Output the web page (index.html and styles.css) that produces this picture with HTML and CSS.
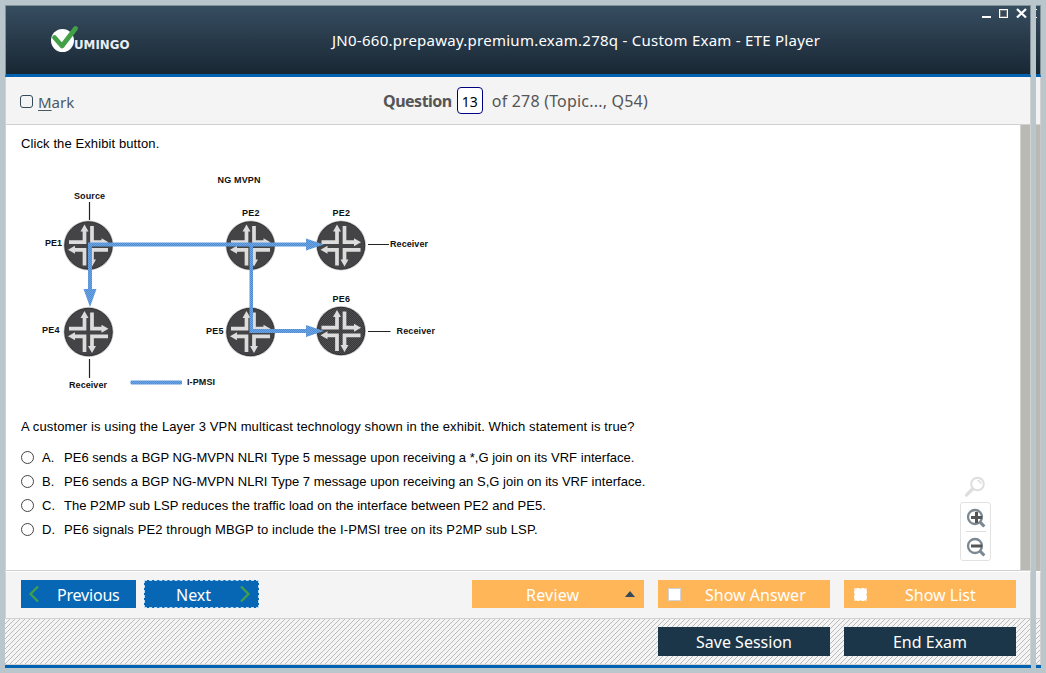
FILE: index.html
```html
<!DOCTYPE html>
<html lang="en">
<head>
<meta charset="utf-8">
<title>ETE Player</title>
<link rel="stylesheet" href="styles.css">
</head>
<body>
<div class="desktop">
  <main class="window">
    <header class="titlebar">
      <svg class="logo" width="84" height="32" viewBox="0 0 84 32">
        <circle cx="13.500" cy="17.500" r="11.500" fill="#fff"/>
        <path d="M5.500 14.500 L13 23 L26.500 5.500" fill="none" stroke="#43a047" stroke-width="4.800" stroke-linecap="round" stroke-linejoin="round"/>
        <text class="logo-text" x="25" y="26" textLength="55.500" lengthAdjust="spacingAndGlyphs">UMINGO</text>
      </svg>
      <h1 class="title"><span>JN0-660.prepaway.premium.exam.278q - Custom Exam - ETE Player</span></h1>
      <svg class="controls" width="48" height="14" viewBox="0 0 48 14" shape-rendering="crispEdges">
        <path d="M1 10h9v2H1z" fill="#fff"/>
        <rect x="18.500" y="3.500" width="8" height="8" fill="none" stroke="#fff"/>
        <rect x="19.500" y="4.500" width="6" height="6" fill="none" stroke="#777"/>
        <path d="M36 3 L45 11.500 M45 3 L36 11.500" stroke="#fff" stroke-width="2.300" shape-rendering="auto"/>
      </svg>
    </header>
    <section class="toolbar">
      <label class="mark"><i class="box"></i><span><u>M</u>ark</span></label>
      <div class="counter"><b>Question</b><span class="num">13</span><span class="total">of 278 (Topic..., Q54)</span></div>
    </section>
    <section class="content">
      <div class="page">
        <p class="intro"><span>Click the Exhibit button.</span></p>
        <svg class="exhibit" width="430" height="230" viewBox="20 167 430 230">
          <defs>
            <pattern id="mesh" width="2" height="2" patternUnits="userSpaceOnUse">
              <rect width="2" height="2" fill="#38383a"/><path d="M0 0h1v1H0zM1 1h1v1H1z" fill="#505053"/>
            </pattern>
            <pattern id="line" width="2" height="2" patternUnits="userSpaceOnUse">
              <rect width="2" height="2" fill="#6aa6e8"/><path d="M0 0h1v1H0zM1 1h1v1H1z" fill="#538cce"/>
            </pattern>
            <g id="router">
              <circle r="25" fill="#c3c3c3"/>
              <circle r="23.700" fill="url(#mesh)" stroke="#303033" stroke-width="1"/>
              <g fill="none" stroke="#dcdcdc" stroke-width="3.700">
                <path d="M-19.500 -3.300H-4V-16"/>
                <path d="M3.500 -19.500V-3.300H15"/>
                <path d="M19.500 4.300H3.500V16"/>
                <path d="M-4 20V4.300H-15"/>
              </g>
              <path d="M-4 -21l4 7h-8zM20 -3.300l-7 4v-8zM3.500 21l-4 -7h8zM-20.500 4.300l7 -4v8z" fill="#dcdcdc"/>
            </g>
          </defs>
          <g stroke="#222" stroke-width="1.200">
            <path d="M89.500 202v18M89.500 359v19M368 244.500h21M368 331.500h22.500"/>
          </g>
          <use href="#router" x="88.500" y="245.500"/>
          <use href="#router" x="250.500" y="245.500"/>
          <use href="#router" x="341" y="245.500"/>
          <use href="#router" x="88.500" y="332"/>
          <use href="#router" x="250.500" y="332"/>
          <use href="#router" x="341" y="331"/>
          <g fill="url(#line)">
            <path d="M88 242.500H306V238.500L324 244.500L306 250.500V246.500H92V289H96.500L90 307L83.500 289H88z"/>
            <path d="M249.500 245H253V329H306V325L324 331L306 337V333H249.500z"/>
            <rect x="130.500" y="380.500" width="51.500" height="4" rx="1"/>
          </g>
          <g class="labels">
            <text x="217.500" y="182.500" textLength="43">NG MVPN</text>
            <text x="74" y="199" textLength="31">Source</text>
            <text x="45" y="246" textLength="17">PE1</text>
            <text x="242" y="215.500" textLength="17.500">PE2</text>
            <text x="332.500" y="215.500" textLength="17.500">PE2</text>
            <text x="390" y="247" textLength="38">Receiver</text>
            <text x="42" y="333" textLength="17.500">PE4</text>
            <text x="206" y="334" textLength="17.500">PE5</text>
            <text x="332.500" y="301.500" textLength="17.500">PE6</text>
            <text x="396.500" y="333.500" textLength="38.500">Receiver</text>
            <text x="69" y="387.500" textLength="38">Receiver</text>
            <text x="187" y="385" textLength="28">I-PMSI</text>
          </g>
        </svg>
        <p class="question"><span>A customer is using the Layer 3 VPN multicast technology shown in the exhibit. Which statement is true?</span></p>
        <ol class="answers">
          <li><i class="radio"></i><b>A.</b><span class="snug">PE6 sends a BGP NG-MVPN NLRI Type 5 message upon receiving a *,G join on its VRF interface.</span></li>
          <li><i class="radio"></i><b>B.</b><span class="snug">PE6 sends a BGP NG-MVPN NLRI Type 7 message upon receiving an S,G join on its VRF interface.</span></li>
          <li><i class="radio"></i><b>C.</b><span class="snug">The P2MP sub LSP reduces the traffic load on the interface between PE2 and PE5.</span></li>
          <li><i class="radio"></i><b>D.</b><span class="loose">PE6 signals PE2 through MBGP to include the I-PMSI tree on its P2MP sub LSP.</span></li>
        </ol>
      </div>
      <aside class="zoom">
        <svg class="lens" width="22" height="22" viewBox="0 0 22 22" fill="none" stroke="#dedede">
          <circle cx="13.500" cy="8" r="6.300" stroke-width="2"/><path d="M13.500 4.500a4 4 0 0 1 3.500 3.500" stroke-width="1.300"/><path d="M8.500 13L2.500 19" stroke-width="3.200" stroke-linecap="round"/>
        </svg>
        <div class="zoom-box">
          <svg width="20" height="20" viewBox="0 0 20 20" fill="none" stroke="#7b8791">
            <circle cx="9" cy="9" r="7" stroke-width="2.300"/><path d="M14 14l4.300 4.500" stroke-width="3.200"/><path d="M5 9.500h11M10.500 4v11" stroke="#555" stroke-width="3"/>
          </svg>
          <svg width="20" height="20" viewBox="0 0 20 20" fill="none" stroke="#7b8791">
            <circle cx="9" cy="9" r="7" stroke-width="2.300"/><path d="M14 14l4.300 4.500" stroke-width="3.200"/><path d="M5 9h11" stroke="#555" stroke-width="3"/>
          </svg>
        </div>
      </aside>
      <div class="scroll"></div>
    </section>
    <nav class="actions">
      <button class="btn blue prev"><svg width="12" height="18" viewBox="0 0 12 18"><path d="M10 1.500L2.500 9L10 16.500" fill="none" stroke="#43a047" stroke-width="2.200"/></svg><span>Previous</span></button>
      <button class="btn blue next"><span>Next</span><svg width="12" height="18" viewBox="0 0 12 18"><path d="M2 1.500L9.500 9L2 16.500" fill="none" stroke="#43a047" stroke-width="2.200"/></svg></button>
      <button class="btn orange review"><span>Review</span><svg width="10" height="6" viewBox="0 0 10 6"><path d="M0 6L5 0L10 6z" fill="#34495a"/></svg></button>
      <button class="btn orange answer"><i class="check"></i><span>Show Answer</span></button>
      <button class="btn orange list"><i class="check dashed"></i><span>Show List</span></button>
    </nav>
    <footer class="session">
      <button class="btn navy save"><span>Save Session</span></button>
      <button class="btn navy end"><span>End Exam</span></button>
    </footer>
  </main>
  <div class="edge">
    <div class="edge-top"><i></i></div>
    <div class="edge-bar"></div>
    <div class="edge-scroll"></div>
    <div class="edge-actions"></div>
    <div class="edge-foot"></div>
  </div>
</div>
</body>
</html>
```
FILE: styles.css
```css
* { box-sizing: border-box; }
body { margin: 0; font-family: "Noto Sans", "Open Sans", sans-serif; }
p, h1, ol { margin: 0; padding: 0; font-weight: 400; }
span { white-space: nowrap; }
.desktop { width: 1046px; height: 673px; padding: 5px; display: flex; gap: 5px; background: #b9c6cc; overflow: hidden; }
.window, .edge { height: 663px; display: grid; grid-template-rows: 72px 48px 446px 47px 50px; }
.window { width: 1026px; }
.edge { width: 5px; }

.titlebar, .edge-top { border-top: 1px solid #859297; border-right: 1px solid #859297; border-bottom: 3px solid #0062b1; background: linear-gradient(#364d60, #192734); }
.titlebar { border-left: 1px solid #859297; display: grid; grid-template-columns: 326px 1fr 49px; }
.logo { margin: 17px 0 0 43px; }
.logo-text { font: bold 11.500px "DejaVu Sans", sans-serif; fill: #e9edf5; }
.title { font-size: 15px; line-height: 22px; color: #fff; padding-top: 23px; }
.title span { letter-spacing: 0.26px; }
.controls { margin-top: 0; }
.edge-top i { display: block; width: 1px; height: 9px; margin-top: 3px; border-top: 1px solid #fff; border-bottom: 1px solid #fff; }

.toolbar, .edge-bar { background: #f4f4f4; border-bottom: 1px solid #d1d1d1; border-right: 1px solid #d1d1d1; }
.toolbar { border-left: 1px solid #d1d1d1; display: grid; grid-template-columns: 363px 1fr; padding-left: 14px; }
.mark { display: flex; align-items: center; gap: 5px; font-size: 15px; color: #4a5866; padding-top: 3px; }
.mark u { text-underline-offset: 2px; }
.box { width: 13px; height: 13px; border: 1px solid #34495a; border-radius: 3px; margin-bottom: 1px; }
.counter { display: flex; align-items: center; font-size: 16px; color: #555; }
.counter b { letter-spacing: -0.5px; }
.total { letter-spacing: 0.2px; }
.num { width: 26px; height: 27px; margin: 0 9px 0 5px; border: 1px solid #000080; border-radius: 4px; background: #fff; color: #000; font-size: 14px; line-height: 27px; text-align: center; }

.content { display: grid; grid-template-columns: 1fr 60px 11px; background: #fff; border-left: 1px solid #d1d1d1; border-bottom: 1px solid #d1d1d1; }
.page { padding: 9px 0 0 15px; font: 13px "Liberation Sans", Arial, sans-serif; color: #000; }
.intro { height: 20px; line-height: 20px; letter-spacing: 0.1px; }
.exhibit { display: block; margin: 13px 0 0 -1px; }
.labels { font: bold 9px "Liberation Sans", Arial, sans-serif; fill: #111; }
.question { height: 20px; line-height: 20px; margin-top: 20px; letter-spacing: 0.12px; }
.answers { list-style: none; margin-top: 8px; }
.answers li { height: 24px; display: grid; grid-template-columns: 21px 22px 1fr; align-items: center; }
.answers b { font-weight: 400; }
.snug { letter-spacing: 0.025px; }
.loose { letter-spacing: 0.12px; }
.radio { width: 13px; height: 13px; border: 1px solid #444; border-radius: 50%; }
.scroll { background: #bbb9b4; border-left: 1px solid #d1d1d1; border-right: 1px solid #d1d1d1; }
.edge-scroll { background: #bbb9b4; border-right: 1px solid #c8c8c8; }
.zoom { padding-top: 351px; display: flex; flex-direction: column; }
.lens { flex: none; margin-left: 4px; }
.zoom-box { margin: 4px 0 0 0; width: 31px; height: 59px; padding: 5px 5px 0; border: 1px solid #e2e2e2; border-radius: 3px; display: grid; grid-template-rows: 23px 29px; }
.zoom-box svg:last-child { border-top: 1px solid #dedede; padding-top: 5px; height: 26px; }

.actions, .edge-actions { background: #f4f4f4; border-top: 1px solid #fff; border-right: 1px solid #d1d1d1; }
.actions { border-left: 1px solid #d1d1d1; padding: 8px 14px 0 15px; display: flex; align-items: flex-start; }
.btn { border: 0; border-radius: 0; padding: 0; height: 28px; font: 16px/28px "Noto Sans", "Open Sans", sans-serif; color: #fff; display: flex; align-items: center; }
.actions span { padding-top: 2px; }
.blue { width: 115px; background: #0767b5; }
.orange { width: 172px; margin-left: 14px; background: #ffb659; }
.navy { width: 172px; height: 29px; background: #1b3549; justify-content: center; }
.prev { padding-left: 7px; gap: 17px; }
.prev span { letter-spacing: -0.2px; }
.next { margin-left: 8px; padding-left: 31px; gap: 28px; border: 1px dashed #bcdcf8; }
.review { margin-left: 213px; padding-left: 54px; gap: 46px; }
.review span { letter-spacing: 0.2px; }
.answer, .list { padding-left: 10px; }
.answer { gap: 24px; }
.list { gap: 38px; }
.check { width: 13px; height: 13px; background: #fff; border: 1px solid #d2d2d2; }
.dashed { border: 1px dashed #ffe0b6; }

.session, .edge-foot { border-top: 1px solid #d1d1d1; border-bottom: 3px solid #0062b1; box-shadow: inset 0 -1px #d1d1d1, inset -1px 0 #d1d1d1;
  background-color: #f4f4f4;
  background-image: url("data:image/svg+xml,%3Csvg xmlns='http://www.w3.org/2000/svg' width='5' height='5' shape-rendering='crispEdges'%3E%3Cpath d='M0 4h1v1H0zM1 3h1v1H1zM2 2h1v1H2zM3 1h1v1H3zM4 0h1v1H4z' fill='%23bbb'/%3E%3C/svg%3E");
  background-size: 5px 5px; }
.session { display: flex; gap: 14px; justify-content: flex-end; padding: 8px 15px 0 0; }
```
